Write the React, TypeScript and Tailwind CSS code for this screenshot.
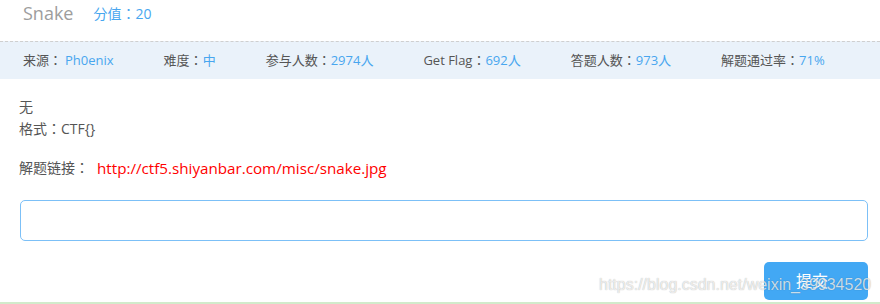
const STATS = [
  { label: "来源：", value: "Ph0enix", gap: true },
  { label: "难度：", value: "中" },
  { label: "参与人数：", value: "2974人" },
  { label: "Get Flag：", value: "692人" },
  { label: "答题人数：", value: "973人" },
  { label: "解题通过率：", value: "71%" },
];

export default function App() {
  return (
    <div className="relative w-[880px] h-[304px] bg-white overflow-hidden font-['Open_Sans','Noto_Sans_CJK_JP',sans-serif]">
      {/* title */}
      <div className="h-[41px] flex items-center pl-[23px] pb-[14px]">
        <span className="text-[18px] text-[#9d9d9d]">Snake</span>
        <span className="ml-[20px] text-[14px] text-[#48a6ef]">分值：20</span>
      </div>

      {/* stats bar */}
      <div className="border-t border-dashed border-[#cfcfcf] bg-[#eaf2fa] h-[38px] flex items-center gap-[50px] pl-[23px] text-[13px]">
        {STATS.map(({ label, value, gap }) => (
          <span key={label} className="text-[#555]">
            {label}
            {gap && <span className="inline-block w-[3px]" />}
            <span className="text-[#48a6ef]">{value}</span>
          </span>
        ))}
      </div>

      {/* body */}
      <div className="pl-[19px] pr-[12px] pt-[17px] text-[14px] text-[#555] leading-[22px]">
        <div>无</div>
        <div>格式：CTF{"{}"}</div>
        <div className="mt-[17px] flex">
          <span>解题链接：</span>
          <span className="ml-[8px] text-[15.2px] text-[#ff0000]">
            http://ctf5.shiyanbar.com/misc/snake.jpg
          </span>
        </div>
        <input
          className="mt-[21px] ml-[1px] block w-[848px] h-[41px] rounded-[5px] border border-[#7cc0f7] outline-none px-3"
          type="text"
        />
        <div className="mt-[21px] flex justify-end">
          <button className="w-[104px] h-[38px] rounded-[5px] bg-[#42a8f4] text-white text-[16px] pr-[8px]">
            提交
          </button>
        </div>
      </div>

      <div className="absolute left-0 right-0 bottom-0 h-[2px] bg-[#d2eacb]" />

      {/* watermark */}
      <div className="absolute left-[599px] top-[273px] text-[16px] text-white/75 font-['Liberation_Sans',sans-serif] [text-shadow:0_0_1px_rgba(0,0,0,0.35)] whitespace-nowrap pointer-events-none">
        https://blog.csdn.net/weixin_39934520
      </div>
    </div>
  );
}
